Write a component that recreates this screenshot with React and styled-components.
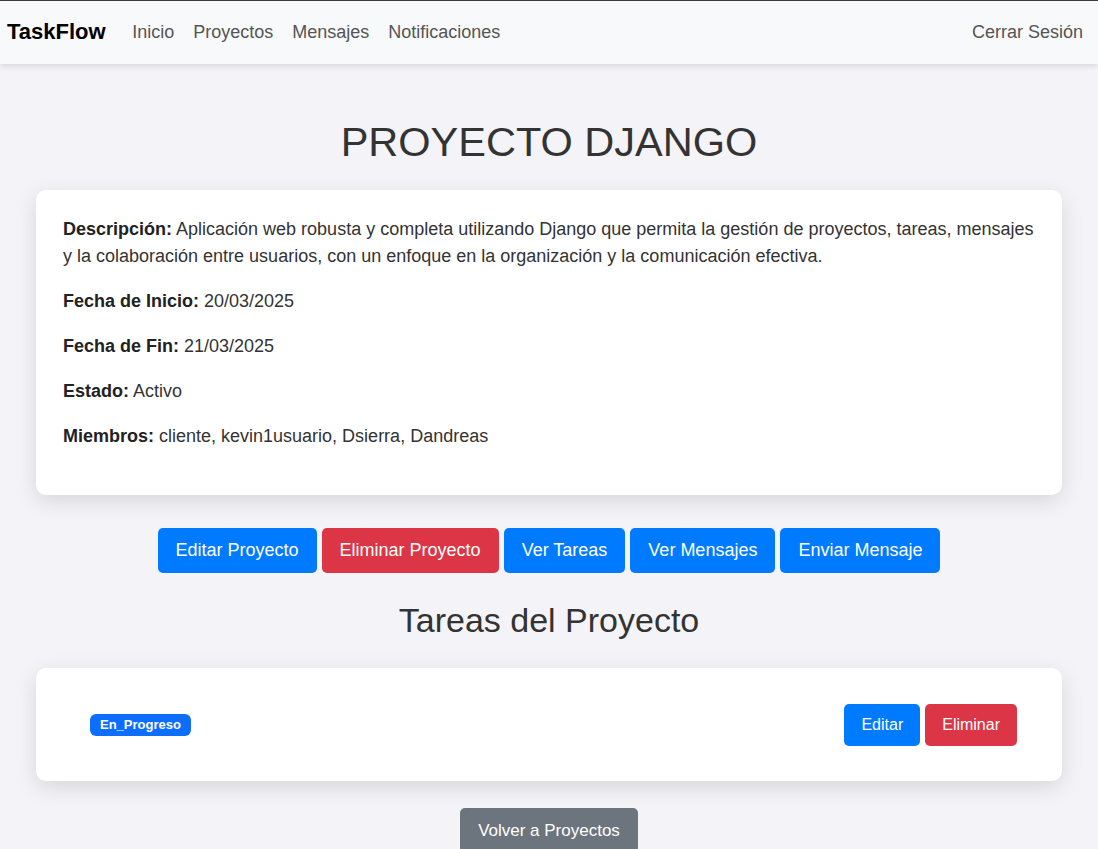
import styled, { createGlobalStyle } from "styled-components";

const GlobalStyle = createGlobalStyle`
  body {
    margin: 0;
    background: #f4f4f8;
    font-family: "Liberation Sans", Arial, sans-serif;
    color: #333;
  }
`;

const Navbar = styled.nav`
  display: flex;
  align-items: center;
  height: 62px;
  padding: 0 15px 1px 7px;
  background: #f8f9fa;
  border-top: 1px solid #3a3a3a;
  box-shadow: 0 2px 6px rgba(0, 0, 0, 0.12);
  position: relative;
  z-index: 1;
`;

const Brand = styled.a`
  font-size: 22px;
  font-weight: 700;
  color: #000;
  margin-right: 17px;
  text-decoration: none;
`;

const NavLinks = styled.div`
  display: flex;
  flex: 1;
`;

const NavLink = styled.a`
  font-size: 18px;
  color: #555;
  padding: 0 9.5px;
  text-decoration: none;
  &:last-child {
    padding-right: 0;
  }
`;

const Main = styled.main`
  display: flex;
  flex-direction: column;
  align-items: center;
  padding: 55px 36px 0;
`;

const Title = styled.h1`
  margin: 0 0 25px;
  font-size: 41.5px;
  font-weight: 400;
  line-height: 1.12;
  color: #333;
`;

const Card = styled.section`
  align-self: stretch;
  background: #fff;
  border-radius: 10px;
  box-shadow: 0 6px 22px rgba(0, 0, 0, 0.12);
  padding: ${(p) => p.$pad || "26px 27px 27px"};
`;

const Field = styled.p`
  margin: 0 0 18px;
  font-size: 18px;
  line-height: 27px;
  color: #333;
  b {
    color: #222;
  }
`;

const Actions = styled.div`
  display: flex;
  gap: 5px;
  margin: 33px 0 28px;
`;

const Button = styled.button`
  font-family: inherit;
  font-size: ${(p) => p.$size || "18px"};
  line-height: ${(p) => (p.$small ? "24px" : "25px")};
  padding: ${(p) => (p.$small ? "9px 17px" : "10px 18px")};
  border: none;
  border-radius: 5px;
  color: #fff;
  background: ${(p) =>
    p.$variant === "danger" ? "#dc3545" : p.$variant === "secondary" ? "#6c757d" : "#007bff"};
  cursor: pointer;
`;

const Subtitle = styled.h2`
  margin: 0 0 28px;
  font-size: 34px;
  font-weight: 400;
  line-height: 1.12;
  color: #333;
`;

const TaskRow = styled.div`
  display: flex;
  align-items: center;
  justify-content: space-between;
`;

const Badge = styled.span`
  background: #0d6efd;
  color: #fff;
  font-size: 13px;
  font-weight: 700;
  line-height: 22px;
  padding: 0 10px;
  border-radius: 6px;
`;

const TaskActions = styled.div`
  display: flex;
  gap: 5px;
`;

const Footer = styled.div`
  margin-top: 27px;
`;

const buttons = [
  { label: "Editar Proyecto" },
  { label: "Eliminar Proyecto", variant: "danger" },
  { label: "Ver Tareas" },
  { label: "Ver Mensajes" },
  { label: "Enviar Mensaje" },
];

export default function App() {
  return (
    <>
      <GlobalStyle />
      <Navbar>
        <Brand href="#">TaskFlow</Brand>
        <NavLinks>
          <NavLink href="#">Inicio</NavLink>
          <NavLink href="#">Proyectos</NavLink>
          <NavLink href="#">Mensajes</NavLink>
          <NavLink href="#">Notificaciones</NavLink>
        </NavLinks>
        <NavLink href="#">Cerrar Sesión</NavLink>
      </Navbar>
      <Main>
        <Title>PROYECTO DJANGO</Title>
        <Card>
          <Field>
            <b>Descripción:</b> Aplicación web robusta y completa utilizando Django que permita la
            gestión de proyectos, tareas, mensajes y la colaboración entre usuarios, con un enfoque
            en la organización y la comunicación efectiva.
          </Field>
          <Field>
            <b>Fecha de Inicio:</b> 20/03/2025
          </Field>
          <Field>
            <b>Fecha de Fin:</b> 21/03/2025
          </Field>
          <Field>
            <b>Estado:</b> Activo
          </Field>
          <Field>
            <b>Miembros:</b> cliente, kevin1usuario, Dsierra, Dandreas
          </Field>
        </Card>
        <Actions>
          {buttons.map((b) => (
            <Button key={b.label} $variant={b.variant}>
              {b.label}
            </Button>
          ))}
        </Actions>
        <Subtitle>Tareas del Proyecto</Subtitle>
        <Card $pad="36px 45px 35px 54px">
          <TaskRow>
            <Badge>En_Progreso</Badge>
            <TaskActions>
              <Button $small $size="16px">
                Editar
              </Button>
              <Button $small $size="16px" $variant="danger">
                Eliminar
              </Button>
            </TaskActions>
          </TaskRow>
        </Card>
        <Footer>
          <Button $variant="secondary" $size="17px">
            Volver a Proyectos
          </Button>
        </Footer>
      </Main>
    </>
  );
}
